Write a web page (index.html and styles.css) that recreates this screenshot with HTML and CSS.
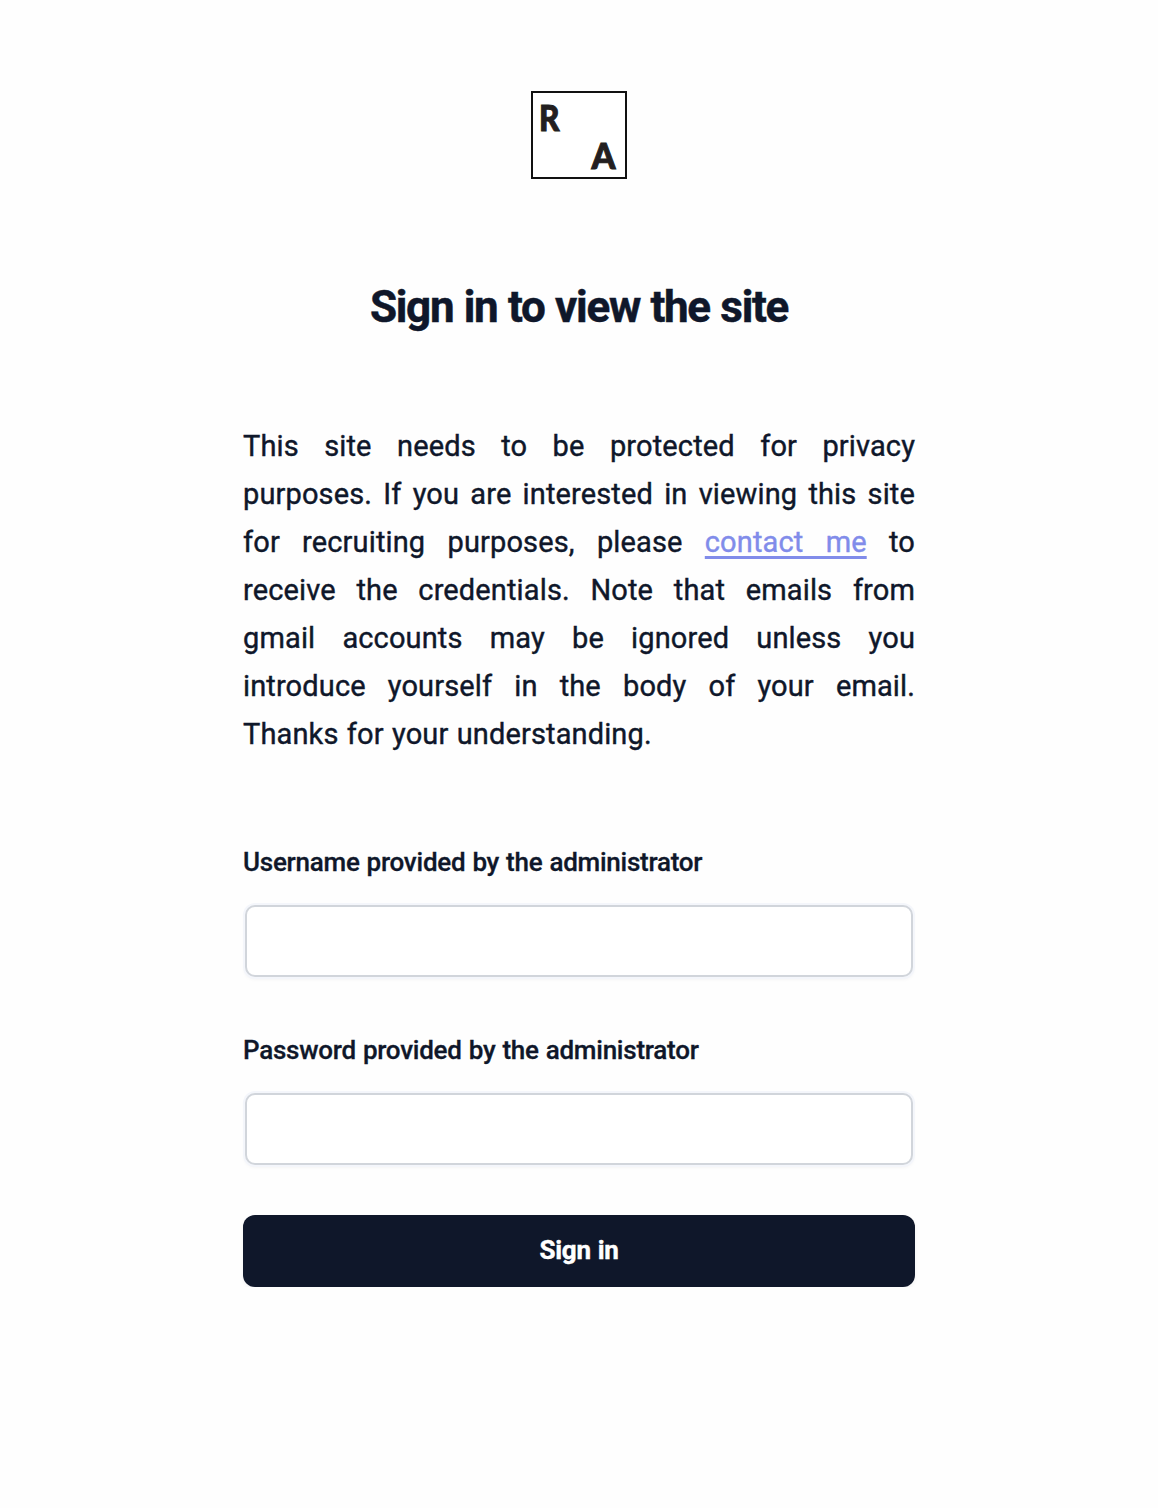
FILE: index.html
```html
<!DOCTYPE html>
<html lang="en">
<head>
<meta charset="utf-8">
<title>Sign in</title>
<link rel="stylesheet" href="styles.css">
</head>
<body>
<main class="page">
  <svg class="logo" viewBox="0 0 96 88" role="img" aria-label="RA">
    <rect x="1" y="1" width="94" height="86" fill="#fff" stroke="#111" stroke-width="2"/>
    <text class="mark" x="8" y="39.5" textLength="20.5" lengthAdjust="spacingAndGlyphs">R</text>
    <text class="mark" x="60.5" y="77.5" textLength="24" lengthAdjust="spacingAndGlyphs">A</text>
  </svg>
  <h1 class="title">Sign in to view the site</h1>
  <p class="intro">This site needs to be protected for privacy purposes. If you are interested in viewing this site for recruiting purposes, please <a class="link" href="#">contact me</a> to receive the credentials. Note that emails from gmail accounts may be ignored unless you introduce yourself in the body of your email. Thanks for your understanding.</p>
  <form class="form">
    <div class="field">
      <label class="label" for="user">Username provided by the administrator</label>
      <input class="input" id="user" type="text">
    </div>
    <div class="field">
      <label class="label" for="pass">Password provided by the administrator</label>
      <input class="input" id="pass" type="password">
    </div>
    <button class="submit" type="button">Sign in</button>
  </form>
</main>
</body>
</html>
```
FILE: styles.css
```css
* { box-sizing: border-box; }
body { margin: 0; background: #fefefe; color: #0f172a; font-family: Roboto, sans-serif; }
.page { width: 672px; margin: 0 auto; padding-top: 91px; display: flex; flex-direction: column; }
.logo { width: 96px; height: 88px; align-self: center; display: block; }
.mark { font: 900 36px Lato, sans-serif; fill: #231f20; stroke: #231f20; stroke-width: 1px; }
.title { margin: 92px 0 0; font-size: 44px; line-height: 72px; font-weight: 700; letter-spacing: -1.3px; word-spacing: .9px; text-align: center; -webkit-text-stroke: .5px currentColor; }
.intro { margin: 79px 0 0; font-size: 29px; line-height: 48px; font-weight: 400; letter-spacing: .13px; word-spacing: 1px; text-align: justify; -webkit-text-stroke: .4px currentColor; }
.link { color: #818cea; text-decoration: underline; text-decoration-thickness: 3px; text-underline-offset: 4px; text-decoration-skip-ink: none; }
.form { margin-top: 80px; display: flex; flex-direction: column; gap: 49px; }
.field { display: flex; flex-direction: column; gap: 19px; }
.label { font-size: 26px; line-height: 48px; font-weight: 500; letter-spacing: -.25px; word-spacing: .8px; -webkit-text-stroke: .3px currentColor; }
.input { height: 72px; margin: 0 2px; border: 2px solid #d1d5db; border-radius: 10px; background: #fff; box-shadow: 0 0 0 2px #f4f6fb, 0 2px 4px rgba(15,23,42,.06); }
.submit { height: 72px; margin-top: 1px; padding: 0 0 2px; border: 0; border-radius: 12px; background: #0f172a; color: #fff; font: 700 26px Roboto, sans-serif; letter-spacing: -.25px; word-spacing: .7px; -webkit-text-stroke: .4px currentColor; box-shadow: 0 2px 4px rgba(15,23,42,.05); }
```
